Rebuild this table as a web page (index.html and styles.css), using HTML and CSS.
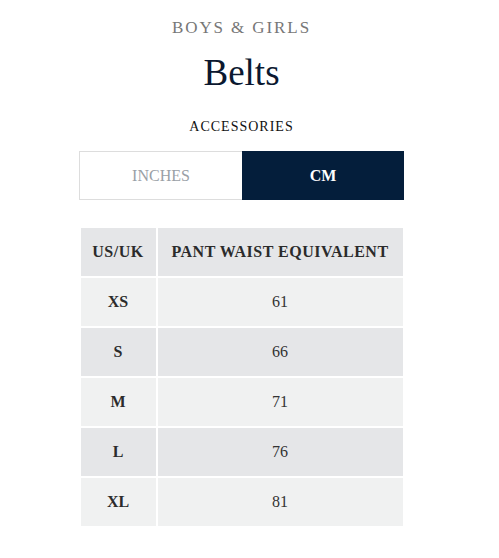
FILE: index.html
```html
<!DOCTYPE html>
<html>
<head>
<meta charset="utf-8">
<link rel="stylesheet" href="styles.css">
</head>
<body>
<div class="page">
  <div class="kicker">BOYS &amp; GIRLS</div>
  <h1 class="title">Belts</h1>
  <div class="category">ACCESSORIES</div>
  <div class="toggle">
    <div class="opt">INCHES</div>
    <div class="opt active">CM</div>
  </div>
  <table class="sizes">
    <thead>
      <tr><th class="c1">US/UK</th><th>PANT WAIST EQUIVALENT</th></tr>
    </thead>
    <tbody>
      <tr class="odd"><th class="c1">XS</th><td>61</td></tr>
      <tr class="even"><th class="c1">S</th><td>66</td></tr>
      <tr class="odd"><th class="c1">M</th><td>71</td></tr>
      <tr class="even"><th class="c1">L</th><td>76</td></tr>
      <tr class="odd"><th class="c1">XL</th><td>81</td></tr>
    </tbody>
  </table>
</div>
</body>
</html>
```
FILE: styles.css
```css
html, body {
  margin: 0;
  padding: 0;
  background: #fff;
}
body {
  font-family: "Liberation Serif", "Times New Roman", serif;
}
.page {
  width: 483px;
  display: flex;
  flex-direction: column;
  align-items: center;
  padding-top: 17px;
}
.kicker {
  font-size: 17px;
  letter-spacing: 1.9px;
  color: #777;
  line-height: 22px;
}
.title {
  margin: 11px 0 0;
  font-size: 37px;
  font-weight: normal;
  color: #0b1830;
  line-height: 46px;
}
.category {
  margin-top: 22px;
  font-size: 14px;
  letter-spacing: 1px;
  color: #111;
  line-height: 18px;
}
.toggle {
  margin-top: 15px;
  width: 325px;
  height: 49px;
  display: flex;
  box-sizing: border-box;
  border: 1px solid #ddd;
}
.opt {
  flex: 1;
  display: flex;
  align-items: center;
  justify-content: center;
  font-size: 16px;
  color: #9aa0a6;
}
.opt.active {
  background: #041e3b;
  color: #fff;
  font-weight: bold;
  margin: -1px -1px -1px 0;
}
.sizes {
  margin-top: 26px;
  width: 326px;
  border-collapse: separate;
  border-spacing: 2px;
  font-size: 16px;
  color: #222;
}
.sizes th, .sizes td {
  height: 48px;
  padding: 0;
  text-align: center;
  vertical-align: middle;
}
.sizes th {
  font-weight: bold;
  color: #2b2b2b;
}
.sizes thead th {
  background: #e5e6e8;
  letter-spacing: 0.5px;
}
.sizes .c1 {
  width: 75px;
}
.sizes td {
  color: #333;
}
.sizes tr.odd th, .sizes tr.odd td {
  background: #f0f1f1;
}
.sizes tr.even th, .sizes tr.even td {
  background: #e5e6e8;
}
```
